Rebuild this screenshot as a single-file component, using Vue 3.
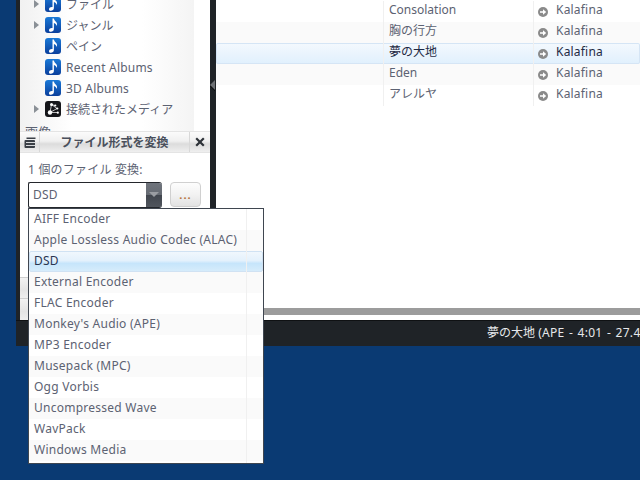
<script setup>
const tree = [
  { label: 'ファイル', arrow: true, icon: 'note' },
  { label: 'ジャンル', arrow: true, icon: 'note' },
  { label: 'ペイン', arrow: false, icon: 'note' },
  { label: 'Recent Albums', arrow: false, icon: 'note', latin: true },
  { label: '3D Albums', arrow: false, icon: 'note', latin: true },
  { label: '接続されたメディア', arrow: true, icon: 'media' },
]
const tracks = [
  { title: 'Consolation' },
  { title: '胸の行方' },
  { title: '夢の大地', selected: true },
  { title: 'Eden' },
  { title: 'アレルヤ' },
]
const encoders = [
  'AIFF Encoder',
  'Apple Lossless Audio Codec (ALAC)',
  'DSD',
  'External Encoder',
  'FLAC Encoder',
  "Monkey's Audio (APE)",
  'MP3 Encoder',
  'Musepack (MPC)',
  'Ogg Vorbis',
  'Uncompressed Wave',
  'WavPack',
  'Windows Media',
]
</script>

<template>
  <div class="desktop">
    <div class="window">
      <div class="body">
        <aside class="sidebar">
          <div class="tree-wrap">
            <ul class="tree">
              <li v-for="item in tree" :key="item.label" class="tree-row">
                <span class="expander" :class="{ hidden: !item.arrow }"></span>
                <svg v-if="item.icon === 'note'" class="tree-icon" viewBox="0 0 16 16">
                  <defs>
                    <linearGradient id="blue" x1="0" y1="0" x2="0" y2="1">
                      <stop offset="0" stop-color="#1a7ad8" />
                      <stop offset="1" stop-color="#0a3f9c" />
                    </linearGradient>
                  </defs>
                  <rect width="16" height="16" rx="3" fill="url(#blue)" />
                  <path d="M7.500 1.500h1.400c.2 1.600 1.300 2.600 2.300 3.600 1 1.100 1.100 2.600.5 4-.1-1.400-1.100-2.600-2.800-3.100v6c0 1.700-1.500 2.800-3 2.800-1.200 0-1.900-.7-1.900-1.600 0-1.400 1.400-2.300 2.800-2.300.3 0 .5 0 .7.100z" fill="#fff" />
                </svg>
                <svg v-else class="tree-icon" viewBox="0 0 16 16">
                  <rect width="16" height="16" rx="3" fill="#15161a" />
                  <path d="M6.500 3.500 5 11.500h7.500M6.500 3.500 10 4.500M6.500 3.500 12 7.500M5 11.500 12 7.500" stroke="#fff" stroke-width=".7" fill="none" />
                  <circle cx="6.500" cy="3.500" r="1.500" fill="#fff" />
                  <circle cx="5" cy="11.500" r="2.200" fill="#fff" />
                  <circle cx="10.300" cy="4.500" r="1.100" fill="#fff" />
                  <circle cx="12.300" cy="7.500" r="1.100" fill="#fff" />
                  <circle cx="12.800" cy="11.700" r="1.100" fill="#fff" />
                </svg>
                <span class="tree-label" :class="{ latin: item.latin }">{{ item.label }}</span>
              </li>
              <li class="tree-section">画像</li>
            </ul>
          </div>

          <section class="panel">
            <header class="panel-head">
              <span class="head-menu">
                <svg width="12" height="12" viewBox="0 0 12 12">
                  <path d="M2.500 0.500h9v1.500h-9z" fill="#3a3f46" />
                  <rect x="0.500" y="3" width="10.500" height="8" rx="1" fill="#3a3f46" />
                  <path d="M2 5h9v1h-9zM2 8h9v1h-9z" fill="#d8dadc" />
                </svg>
              </span>
              <span class="head-title">ファイル形式を変換</span>
              <span class="head-close">
                <svg width="10" height="10" viewBox="0 0 10 10">
                  <path d="M1.200 1.200l7.600 7.600M8.800 1.200l-7.600 7.600" stroke="#2d3238" stroke-width="2.200" />
                </svg>
              </span>
            </header>
            <div class="panel-body">
              <div class="count">1 個のファイル 変換:</div>
              <div class="controls">
                <div class="select">
                  <span class="select-value">DSD</span>
                  <span class="select-arrow"></span>
                </div>
                <button class="more" type="button">...</button>
              </div>
            </div>
          </section>
          <div class="band"></div>
          <div class="band last"></div>
        </aside>

        <div class="splitter"><span class="grip"></span></div>

        <main class="main">
          <div class="tracks">
            <div
              v-for="track in tracks"
              :key="track.title"
              class="track"
              :class="{ selected: track.selected }"
            >
              <span class="cell-blank"></span>
              <span class="cell-title">{{ track.title }}</span>
              <span class="cell-artist">
                <svg class="go" viewBox="0 0 10 10">
                  <circle cx="5" cy="5" r="5" fill="#8a8a8a" />
                  <path d="M2 4.200h3V2.200L8.200 5 5 7.800V5.800H2z" fill="#fff" />
                </svg>
                <span class="latin">Kalafina</span>
              </span>
            </div>
          </div>
          <div class="hscroll"></div>
        </main>
      </div>
      <footer class="status">夢の大地 <span class="status-info">(APE - 4:01 - 27.4 MB)</span></footer>
    </div>

    <ul class="dropdown">
      <li
        v-for="name in encoders"
        :key="name"
        class="option"
        :class="{ active: name === 'DSD' }"
      >{{ name }}</li>
    </ul>
  </div>
</template>

<style scoped>
.desktop {
  position: relative;
  width: 640px;
  height: 480px;
  overflow: hidden;
  background: #0a3a73;
  font-family: "Noto Sans", "Noto Sans CJK JP", sans-serif;
  font-size: 12px;
  color: #5c6272;
}
ul {
  list-style: none;
  margin: 0;
  padding: 0;
}
.latin {
  letter-spacing: 0.2px;
}
.window {
  position: absolute;
  left: 16px;
  top: 0;
  width: 624px;
  height: 346px;
  display: flex;
  flex-direction: column;
  background: #1f2327;
}
.body {
  height: 320px;
  display: flex;
  padding-left: 4px;
}
.sidebar {
  width: 190px;
  display: flex;
  flex-direction: column;
  background: #fff;
}
.tree-wrap {
  height: 131px;
  overflow: hidden;
}
.tree {
  width: 174px;
  height: 160px;
  margin-top: -7px;
  background: linear-gradient(90deg, #f1f1f1 0, #fff 30%, #fff 70%, #f4f4f4 100%);
}
.tree-row {
  height: 21px;
  display: flex;
  align-items: center;
  padding-left: 14px;
}
.expander {
  width: 0;
  height: 0;
  border-left: 5px solid #8a9096;
  border-top: 4px solid transparent;
  border-bottom: 4px solid transparent;
  margin-right: 6px;
}
.expander.hidden {
  visibility: hidden;
}
.tree-icon {
  width: 16px;
  height: 16px;
  margin-right: 5px;
  flex: none;
}
.tree-label {
  white-space: nowrap;
}
.tree-label.latin {
  padding-top: 1px;
}
.tree-section {
  height: 21px;
  padding-left: 5px;
  font-size: 13px;
  line-height: 27px;
}
.panel {
  height: 146px;
  display: flex;
  flex-direction: column;
  flex: none;
}
.panel-head {
  height: 22px;
  display: flex;
  align-items: center;
  background: linear-gradient(#fbfbfb 0, #f0f0f0 45%, #dcdcdc 60%, #efefef 100%);
  border-top: 1px solid #e4e4e4;
  border-bottom: 1px solid #e4e4e4;
  box-sizing: border-box;
}
.head-menu {
  width: 20px;
  height: 100%;
  display: flex;
  align-items: center;
  justify-content: center;
  padding-top: 1px;
  box-sizing: border-box;
  border-right: 1px solid #d8d8d8;
}
.head-title {
  flex: 1;
  text-align: center;
  font-weight: 700;
  color: #4a505c;
  padding-left: 1px;
  padding-right: 1px;
}
.head-close {
  width: 20px;
  height: 100%;
  display: flex;
  align-items: center;
  justify-content: center;
  border-left: 1px solid #d8d8d8;
}
.panel-body {
  padding: 8px 8px 0;
}
.count {
  height: 20px;
  line-height: 18px;
  margin-bottom: 1px;
  white-space: nowrap;
  letter-spacing: 0.2px;
}
.controls {
  display: flex;
  gap: 8px;
  align-items: flex-start;
}
.select {
  width: 134px;
  height: 26px;
  box-sizing: border-box;
  border: 1px solid #24272c;
  border-right: none;
  border-radius: 2px 3px 3px 2px;
  display: flex;
  background: #fff;
  overflow: hidden;
}
.select-value {
  flex: 1;
  padding-left: 4px;
  line-height: 24px;
  letter-spacing: 0.2px;
}
.select-arrow {
  position: relative;
  width: 16px;
  background: linear-gradient(#6f747c 0, #666b73 48%, #41464e 52%, #50555d 100%);
}
.select-arrow::after {
  content: "";
  position: absolute;
  left: 3px;
  top: 9px;
  border-top: 5px solid #9a9da2;
  border-left: 5px solid transparent;
  border-right: 5px solid transparent;
}
.more {
  width: 31px;
  height: 25px;
  padding: 0 0 1px;
  border: 1px solid #d0d0d0;
  border-radius: 4px;
  background: linear-gradient(#fdfdfd 0, #f2f2f2 50%, #e2e2e2 100%);
  color: #b5703a;
  font: 700 11px "Noto Sans", sans-serif;
  letter-spacing: 1px;
}
.band {
  height: 21px;
  background: linear-gradient(#f2f2f2 0, #e4e4e4 60%, #eeeeee 100%);
  border-top: 1px solid #cfcfcf;
  box-sizing: border-box;
}
.band.last {
  height: 22px;
}
.splitter {
  width: 6px;
  flex: none;
  padding-top: 80px;
  box-sizing: border-box;
}
.grip {
  display: block;
  width: 0;
  height: 0;
  border-right: 5px solid #6d7074;
  border-top: 5px solid transparent;
  border-bottom: 5px solid transparent;
  filter: drop-shadow(0 1px 0 #000);
}
.main {
  flex: 1;
  min-width: 0;
  display: flex;
  flex-direction: column;
  background: #fff;
}
.tracks {
  height: 307px;
  margin-top: 1px;
}
.track {
  height: 21px;
  display: flex;
  box-sizing: border-box;
  white-space: nowrap;
}
.track:nth-child(even) {
  background: #fafafa;
}
.track.selected {
  color: #1f2a44;
  background: linear-gradient(#f4f9fe 0, #eaf4fd 50%, #e0f0fd 100%);
  box-shadow: inset 0 0 0 1px #d5e5f5;
  border-radius: 2px;
}
.cell-blank {
  width: 167px;
  flex: none;
}
.cell-title {
  width: 151px;
  line-height: 17px;
  padding-left: 5px;
  box-sizing: border-box;
  border-left: 1px solid #f0f0f0;
  border-right: 1px solid #f0f0f0;
  flex: none;
}
.cell-artist {
  display: flex;
  align-items: flex-start;
  padding-left: 4px;
  line-height: 18px;
}
.go {
  width: 10px;
  height: 10px;
  margin: 6px 8px 0 0;
}
.hscroll {
  height: 7px;
  background: #9c9c9c;
}
.status {
  height: 26px;
  flex: none;
  box-sizing: border-box;
  padding-left: 471px;
  border-top: 1px solid #0f1113;
  line-height: 24px;
  color: #e6e8ea;
  white-space: nowrap;
  overflow: hidden;
}
.status-info {
  letter-spacing: 0.3px;
  word-spacing: 1px;
}
.dropdown {
  position: absolute;
  left: 28px;
  top: 208px;
  width: 236px;
  height: 256px;
  box-sizing: border-box;
  border: 1px solid #3f4650;
  background: #fff;
}
.dropdown::after {
  content: "";
  position: absolute;
  left: 217px;
  top: 0;
  bottom: 0;
  width: 1px;
  background: #f0f0f0;
}
.option {
  height: 21px;
  line-height: 20px;
  padding-left: 5px;
  white-space: nowrap;
  letter-spacing: 0.25px;
}
.option:nth-child(even) {
  background: #fafafa;
}
.option.active {
  color: #2a3550;
  background: linear-gradient(#f0f7fd 0, #e4f1fc 45%, #c6e5fb 60%, #d6ecfb 100%);
  border: 1px solid #d0e2f3;
  border-radius: 2px;
  line-height: 18px;
  padding-left: 4px;
  box-sizing: border-box;
}
</style>
